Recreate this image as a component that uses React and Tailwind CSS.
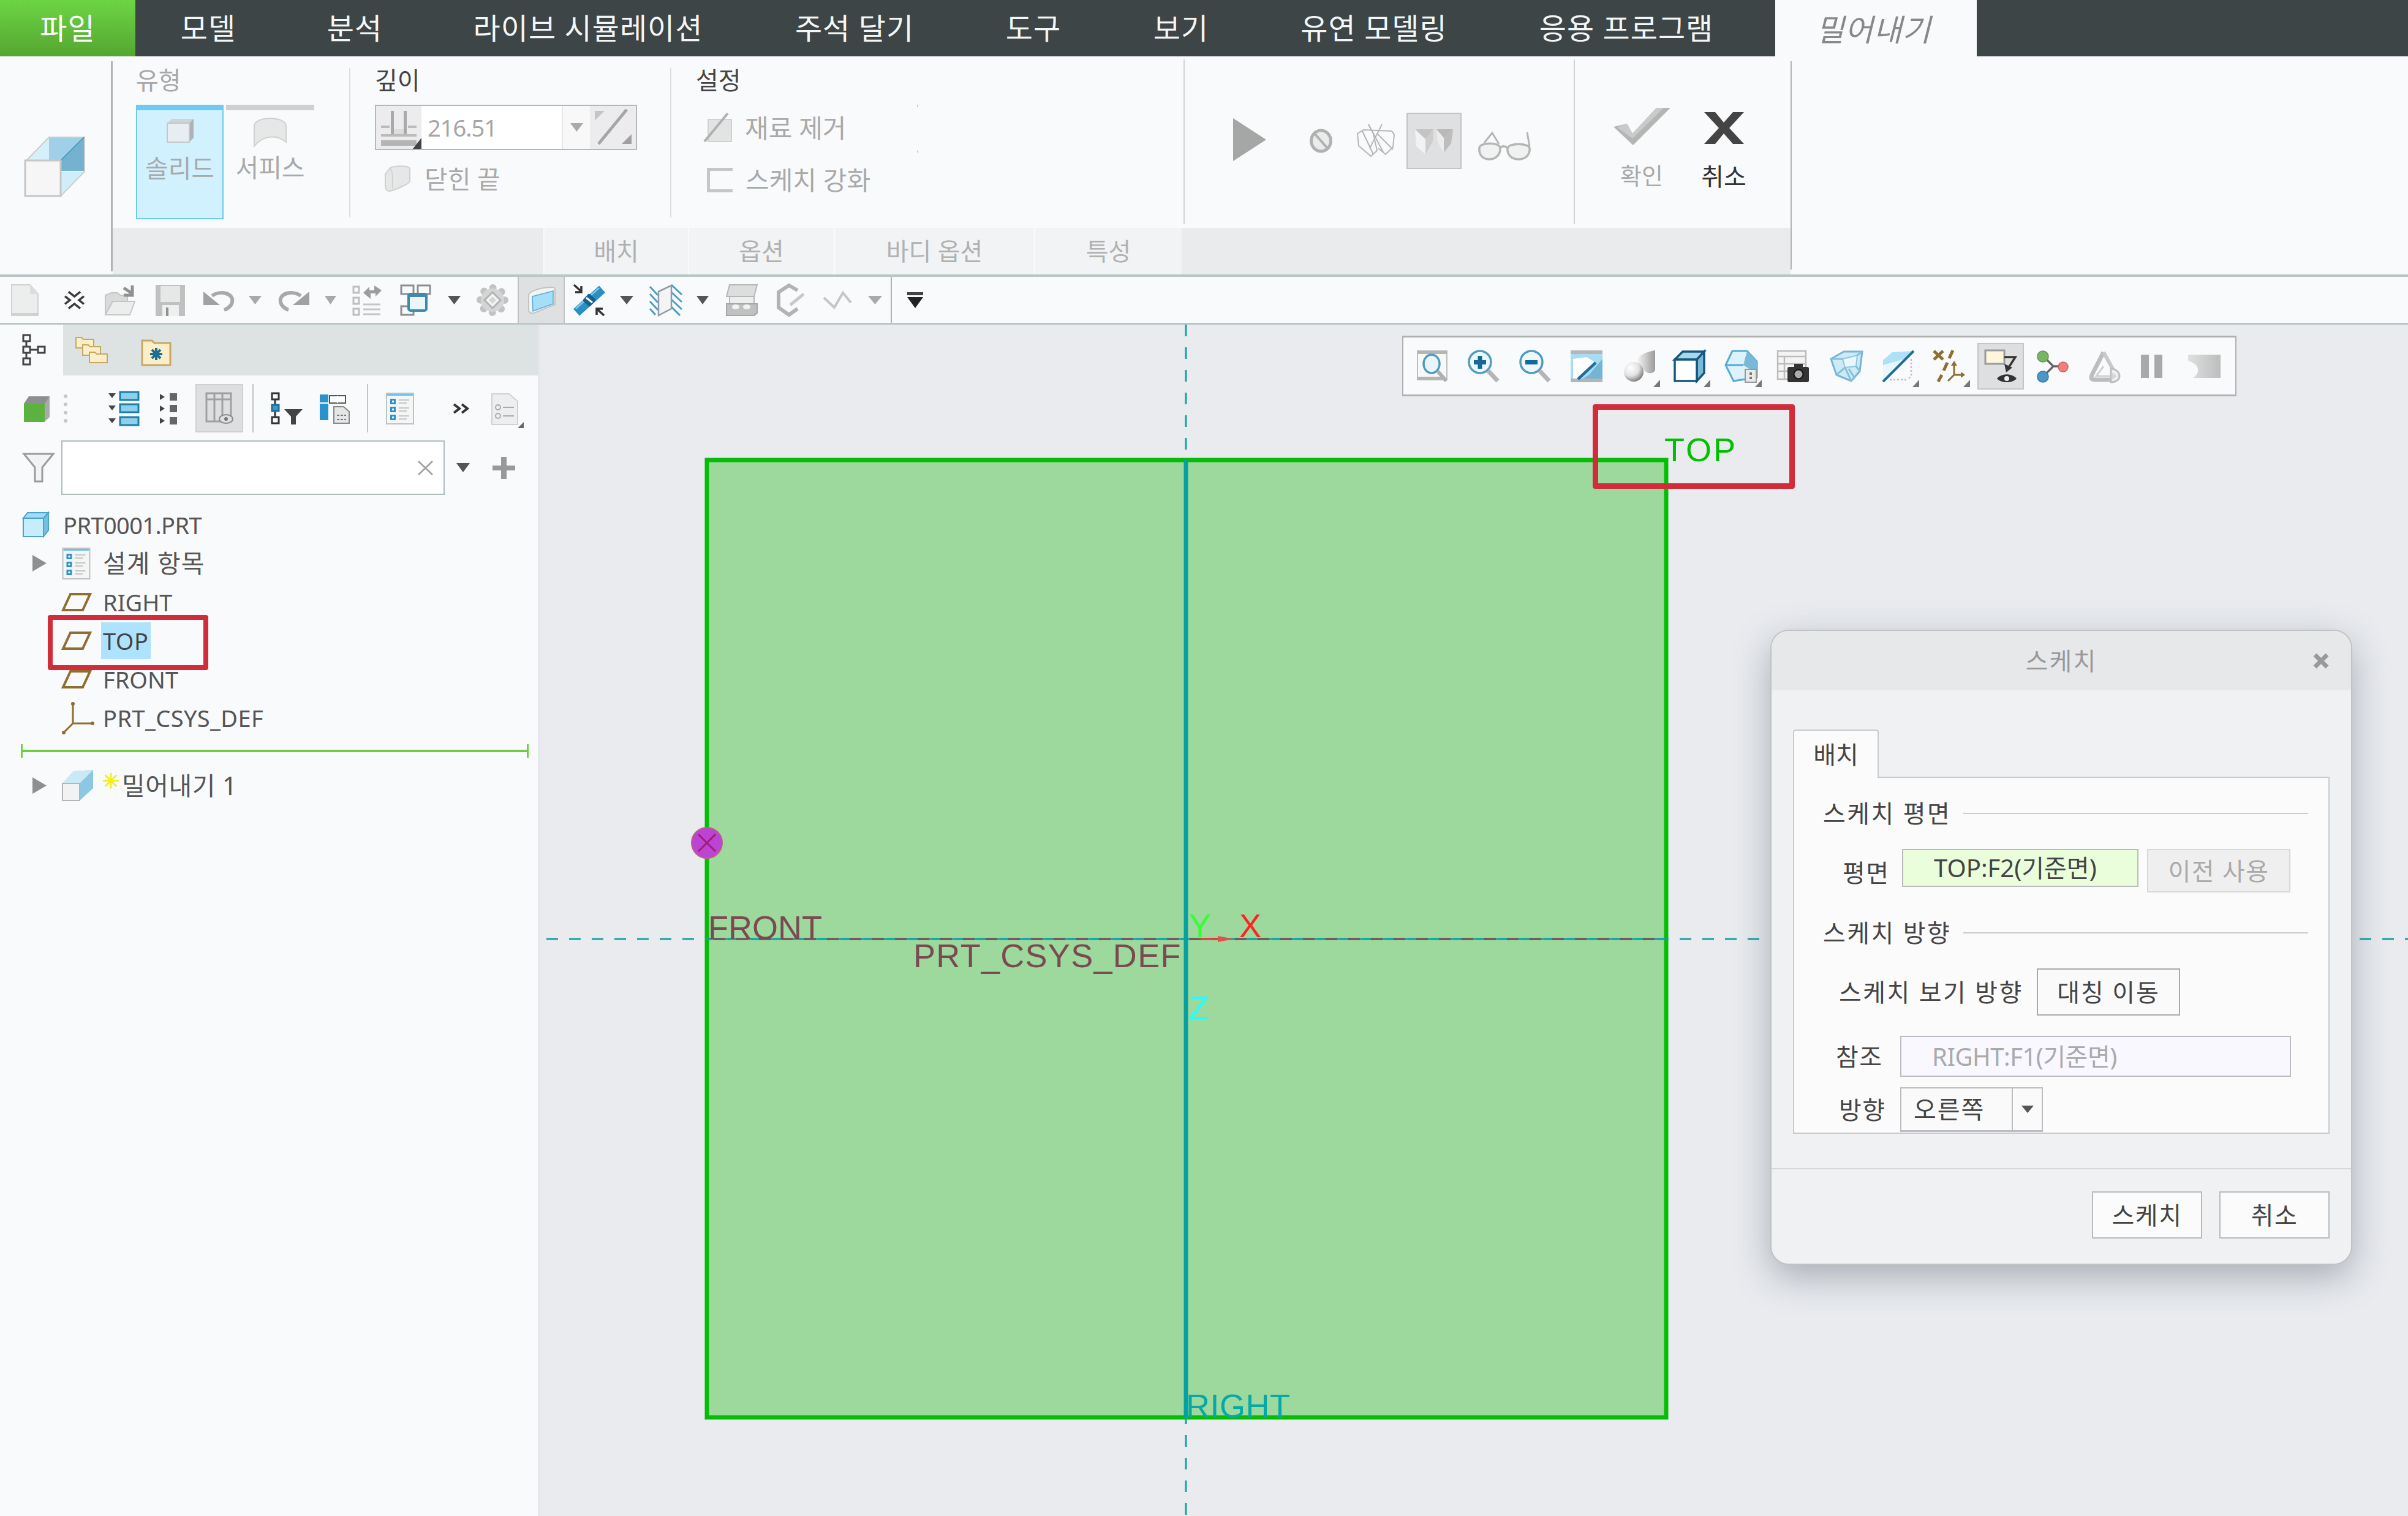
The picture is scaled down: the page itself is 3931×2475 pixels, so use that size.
import React from "react";

const Ico = ({ w, h, vb, className = "", children }) => (
  <svg width={w} height={h} viewBox={vb || `0 0 ${w} ${h}`} className={`block shrink-0 overflow-visible ${className}`}>
    {children}
  </svg>
);

const Tri = ({ w = 21, h = 14, c = "#a9a9a9", className = "" }) => (
  <Ico w={w} h={h} className={className}>
    <polygon points={`0,0 ${w},0 ${w / 2},${h}`} fill={c} />
  </Ico>
);

// small flyout mark at the corner of toolbar icons
const Flyout = () => <polygon points="49,60 60,48 60,60" fill="#777" />;

// ---- ribbon icons
const ExtrudeIcon = () => (
  <Ico w={100} h={106} vb="40 220 100 106">
    <polygon points="43,262 80,224 80,262" fill="#d5f0fa" />
    <polygon points="80,224 137,224 99,262 80,262" fill="#9fd0e8" />
    <polygon points="99,262 137,224 137,279 99,279" fill="#74b2d0" />
    <polygon points="99,280 137,280 99,318" fill="#cfeefa" />
    <path d="M43 262 L80 224 H138 V280 L99 320" fill="none" stroke="#c9cdcf" strokeWidth="2" />
    <line x1="99" y1="262" x2="137" y2="224" stroke="#4f9cc2" strokeWidth="2" />
    <rect x="41" y="262" width="58" height="58" fill="#f6f6f6" stroke="#c6c6c6" strokeWidth="3" />
  </Ico>
);

const SolidIcon = () => (
  <Ico w={44} h={40}>
    <polygon points="1,8 9,1 44,1 37,8" fill="#cfd3d6" />
    <polygon points="37,8 44,1 44,32 37,39" fill="#aeb2b4" />
    <rect x="1" y="8" width="36" height="31" fill="#e8edf1" stroke="#c4c7c9" strokeWidth="2" />
  </Ico>
);

const SurfaceIcon = () => (
  <Ico w={54} h={48}>
    <path d="M1 47 V14 C1 -3 53 -3 53 14 V40 C36 26 14 30 1 47Z" fill="#e6e8e8" stroke="#cfd1d1" strokeWidth="2" />
  </Ico>
);

const DepthIcon = () => (
  <Ico w={74} h={70} className="bg-[#ececee]">
    <rect x="8" y="32" width="14" height="4" fill="#bbb" />
    <rect x="52" y="32" width="14" height="4" fill="#bbb" />
    <rect x="8" y="46" width="58" height="4" fill="#bbb" />
    <rect x="8" y="56" width="58" height="9" fill="#b5b5b5" />
    <rect x="24" y="8" width="5" height="38" fill="#aaa" />
    <rect x="45" y="8" width="5" height="38" fill="#aaa" />
    <rect x="29" y="38" width="16" height="8" fill="#ddd" />
    <polygon points="60,70 74,52 74,70" fill="#444" />
  </Ico>
);

const FlipIcon = () => (
  <Ico w={75} h={70} className="bg-[#ececee]">
    <line x1="14" y1="62" x2="60" y2="6" stroke="#a5a5a5" strokeWidth="5" />
    <polygon points="8,8 24,8 8,24" fill="#c5c5c5" />
    <polygon points="68,62 52,62 68,46" fill="#a0a0a0" />
  </Ico>
);

const ClosedEndIcon = () => (
  <Ico w={44} h={44}>
    <path d="M2 14 L10 4 C18 0 42 0 42 6 V26 C42 30 14 42 8 42 C4 42 2 38 2 34Z" fill="#e6e8e8" stroke="#cfd1d1" strokeWidth="2" />
    <path d="M10 4 C14 10 14 14 14 38" fill="none" stroke="#d2d4d4" strokeWidth="2" />
  </Ico>
);

const RemoveIcon = () => (
  <Ico w={46} h={48}>
    <rect x="6" y="10" width="38" height="36" fill="#e2e4e4" stroke="#d0d2d2" strokeWidth="2" />
    <line x1="0" y1="46" x2="38" y2="0" stroke="#b0b0b0" strokeWidth="4" />
  </Ico>
);

const PlayIcon = () => (
  <Ico w={54} h={70}>
    <polygon points="0,0 54,35 0,70" fill="#a5a7a7" />
  </Ico>
);

const StopIcon = () => (
  <Ico w={39} h={40}>
    <ellipse cx="19.5" cy="20" rx="16" ry="17" fill="#eaebeb" stroke="#b0b2b2" strokeWidth="5" />
    <line x1="9" y1="8" x2="30" y2="32" stroke="#b0b2b2" strokeWidth="4" />
  </Ico>
);

const WireIcon = () => (
  <Ico w={65} h={53}>
    <g fill="none" stroke="#b4b6b6" strokeWidth="2">
      <polyline points="20,1 28,16 34,44 24,53 4,36 2,16 12,10 58,12 62,18 60,38 48,50 36,40" />
      <line x1="42" y1="1" x2="22" y2="40" />
      <line x1="10" y1="12" x2="28" y2="50" />
      <line x1="34" y1="16" x2="60" y2="42" />
      <line x1="20" y1="1" x2="44" y2="46" />
    </g>
  </Ico>
);

const ActiveFacesIcon = () => (
  <Ico w={62} h={43}>
    <polygon points="0,2 17,18 17,43 2,30" fill="#f2f2f2" />
    <polygon points="30,2 17,18 17,43 29,22" fill="#cdcdcd" />
    <polygon points="0,2 30,2 17,18" fill="#c4c4c4" />
    <polygon points="35,2 47,16 47,40 37,23" fill="#ececec" />
    <polygon points="62,2 47,16 47,40 59,25" fill="#bdbdbd" />
    <polygon points="35,2 62,2 47,16" fill="#b8b8b8" />
  </Ico>
);

const GlassesIcon = () => (
  <Ico w={87} h={47}>
    <path d="M2 26 C4 17 34 17 36 26 C37 36 30 45 18 45 C6 45 1 36 2 26Z" fill="#f1f1f1" stroke="#b4b6b6" strokeWidth="3.5" />
    <path d="M48 27 C50 18 82 18 84 27 C85 37 78 45 66 45 C54 45 47 37 48 27Z" fill="#f1f1f1" stroke="#b4b6b6" strokeWidth="3.5" />
    <path d="M36 26 C40 23 45 23 48 27" fill="none" stroke="#b4b6b6" strokeWidth="3.5" />
    <path d="M10 18 L23 2 L34 20" fill="none" stroke="#b4b6b6" strokeWidth="3" />
    <path d="M80 1 L84 24" fill="none" stroke="#b4b6b6" strokeWidth="3" />
  </Ico>
);

const CheckIcon = () => (
  <Ico w={93} h={64}>
    <polygon points="0,33 22,28 31,44 70,2 93,2 32,63" fill="#b4b6b6" />
    <polygon points="22,28 31,44 70,2 82,2 31,52 6,34" fill="#c9caca" />
  </Ico>
);

const CancelIcon = () => (
  <Ico w={65} h={52}>
    <polygon points="0,0 18,0 32,17 47,0 65,0 41,26 65,52 47,52 32,35 18,52 0,52 24,26" fill="#444" />
  </Ico>
);

// ---- quick access toolbar
const IcoNew = ({ className }) => (
  <Ico w={45} h={52} className={className}>
    <path d="M1 1 H31 L44 16 V51 H1Z" fill="#eceeee" stroke="#d0d2d2" strokeWidth="2" />
    <path d="M31 1 V16 H44" fill="#dcdede" />
    <rect x="1" y="47" width="43" height="4" fill="#cfd1d1" />
  </Ico>
);
const IcoClose = ({ className }) => (
  <Ico w={39} h={30} className={className}>
    <path d="M7 5 L32 25 M32 5 L7 25" stroke="#3c3c3c" strokeWidth="13" />
    <path d="M7 5 L32 25 M32 5 L7 25" stroke="#fff" strokeWidth="6" />
  </Ico>
);
const IcoOpen = ({ className }) => (
  <Ico w={52} h={52} className={className}>
    <path d="M2 50 V18 L12 14 H22 L26 18 H38 V28 H14 L2 50Z" fill="#d9dbdb" stroke="#c5c7c7" strokeWidth="2" />
    <path d="M2 50 L14 28 H50 L42 50Z" fill="#eceeee" stroke="#c5c7c7" strokeWidth="2" />
    <path d="M32 6 L44 14 M46 2 V18 H32" fill="none" stroke="#8f9191" strokeWidth="5" />
  </Ico>
);
const IcoSave = ({ className }) => (
  <Ico w={50} h={52} className={className}>
    <rect x="1" y="1" width="48" height="51" fill="#bfc1c1" />
    <rect x="9" y="3" width="32" height="26" fill="#e6e7e7" />
    <rect x="12" y="34" width="27" height="18" fill="#efefef" />
    <rect x="18" y="38" width="4" height="14" fill="#8f9191" />
  </Ico>
);
const IcoUndo = ({ className, flip }) => (
  <Ico w={49} h={34} className={className}>
    <g transform={flip ? "translate(49,0) scale(-1,1)" : undefined}>
      <path d="M14 10 C28 0 50 6 47 20 C46 26 40 31 34 33" fill="none" stroke="#a8aaaa" strokeWidth="6" />
      <polygon points="0,3 0,25 27,25" fill="#a0a2a2" />
    </g>
  </Ico>
);
const IcoRegen = ({ className }) => (
  <Ico w={50} h={52} className={className}>
    <g fill="none" stroke="#bdbfbf" strokeWidth="3">
      <rect x="2" y="4" width="9" height="10" />
      <rect x="2" y="22" width="9" height="10" />
      <rect x="2" y="40" width="9" height="10" />
    </g>
    <path d="M18 33 H46 M18 41 H46 M18 49 H46" stroke="#c4c6c6" strokeWidth="3" />
    <path d="M18 14 L28 4 V10 H36 V2 L48 10 L38 20 V15 H30 V24Z" fill="#9c9e9e" />
  </Ico>
);
const IcoWin = ({ className }) => (
  <Ico w={50} h={52} className={className}>
    <g fill="none" stroke="#8d8f8f" strokeWidth="3">
      <rect x="1" y="2" width="20" height="14" />
      <rect x="28" y="2" width="20" height="14" />
      <rect x="1" y="36" width="20" height="14" />
    </g>
    <rect x="13" y="16" width="29" height="27" rx="3" fill="#eaf6fc" stroke="#4088ad" strokeWidth="4" />
    <rect x="13" y="16" width="29" height="5" fill="#4088ad" />
  </Ico>
);
const IcoGear = ({ className }) => (
  <Ico w={53} h={52} className={className}>
    <circle cx="26" cy="26" r="20" fill="none" stroke="#c2c4c4" strokeWidth="12" strokeDasharray="0.1 15.6" strokeLinecap="round" />
    <circle cx="26" cy="26" r="19" fill="#d4d6d6" />
    <polygon points="26,13 39,26 26,39 13,26" fill="#f4f4f4" stroke="#b2b4b4" strokeWidth="3" />
    <polygon points="26,20 32,26 26,32 20,26" fill="#d4d6d6" />
  </Ico>
);
const IcoPlaneBlue = () => (
  <Ico w={44} h={44}>
    <path d="M1 14 C1 7 24 0 41 1 C43 1 44 2 44 5 V29 L10 43 C4 44 1 42 1 38Z" fill="#f2f3f3" stroke="#c2c4c4" strokeWidth="2" />
    <polygon points="7,16 41,7 41,28 8,40" fill="#a4def8" stroke="#58acd4" strokeWidth="1.5" />
  </Ico>
);
const IcoDatum = ({ className }) => (
  <Ico w={50} h={52} className={className}>
    <line x1="5" y1="46" x2="47" y2="8" stroke="#2b8fc4" strokeWidth="15" />
    <line x1="4" y1="40" x2="42" y2="6" stroke="#7dc5e6" strokeWidth="3" />
    <rect x="18" y="18" width="16" height="16" rx="3" fill="#14618c" transform="rotate(42 26 26)" />
    <path d="M21 22 L31 30" stroke="#fff" strokeWidth="3" />
    <path d="M1 1 L13 12 M13 3 V13 H3" fill="none" stroke="#333" strokeWidth="3.5" />
    <path d="M50 51 L38 40 M38 50 V40 H48" fill="none" stroke="#333" strokeWidth="3.5" />
  </Ico>
);
const IcoHatch = ({ className }) => (
  <Ico w={54} h={52} className={className}>
    <path d="M1 4 L14 18 M1 16 L14 30 M1 28 L14 42 M1 40 L10 50" stroke="#4e9cc2" strokeWidth="3" />
    <path d="M36 1 L53 17 M36 13 L53 29 M36 25 L53 41 M36 37 L50 51" stroke="#4e9cc2" strokeWidth="3" />
    <polygon points="15,12 36,2 36,40 15,51" fill="#f4f4f4" stroke="#8b9da6" strokeWidth="2.5" />
  </Ico>
);
const IcoStack = ({ className }) => (
  <Ico w={51} h={52} className={className}>
    <polygon points="6,1 51,1 46,20 1,20" fill="#dcdede" stroke="#b5b7b7" strokeWidth="2" />
    <rect x="6" y="20" width="40" height="12" fill="#eceded" stroke="#b5b7b7" strokeWidth="2" />
    <polygon points="1,32 51,32 51,47 46,51 1,51" fill="#bfc1c1" stroke="#a5a7a7" strokeWidth="2" />
    <ellipse cx="16" cy="37" rx="6" ry="4" fill="#f2f2f2" />
    <ellipse cx="34" cy="37" rx="6" ry="4" fill="#f2f2f2" />
  </Ico>
);
const IcoHex = ({ className }) => (
  <Ico w={46} h={52} className={className}>
    <path d="M34 10 L20 2 L3 13 V38 L20 50 L34 40" fill="none" stroke="#b2b4b4" strokeWidth="6" />
    <path d="M22 34 L44 16" stroke="#c8caca" strokeWidth="5" />
  </Ico>
);
const IcoTick = ({ className }) => (
  <Ico w={46} h={28} className={className}>
    <path d="M1 10 L18 26 L32 2 L45 18" fill="none" stroke="#c5c7c7" strokeWidth="4" />
  </Ico>
);

// ---- model tree toolbar
const IcoTree = () => (
  <Ico w={39} h={52}>
    <g fill="none" stroke="#444" strokeWidth="3">
      <rect x="2" y="2" width="11" height="10" />
      <rect x="2" y="21" width="11" height="10" />
      <rect x="2" y="40" width="11" height="10" />
      <rect x="26" y="21" width="11" height="10" />
      <path d="M7 12 V21 M7 31 V40 M13 26 H26" />
    </g>
  </Ico>
);
const Folder = ({ x, y }) => (
  <g transform={`translate(${x} ${y})`}>
    <path d="M1 6 H10 L13 9 H30 V23 H1Z" fill="#fbeec8" stroke="#c8a860" strokeWidth="2" />
  </g>
);
const IcoLayers = () => (
  <Ico w={54} h={52}>
    <Folder x={0} y={0} />
    <Folder x={11} y={12} />
    <Folder x={22} y={24} />
  </Ico>
);
const IcoFolderStar = () => (
  <Ico w={50} h={48}>
    <path d="M2 6 H18 L22 10 H48 V46 H2Z" fill="#fbeec8" stroke="#c8a860" strokeWidth="3" />
    <path d="M25 18 V38 M15 28 H35 M18 21 L32 35 M32 21 L18 35" stroke="#1a6f95" strokeWidth="4" />
  </Ico>
);
const IcoCube = () => (
  <Ico w={43} h={44}>
    <polygon points="8,2 42,2 36,14 0,14" fill="#8d8f8f" />
    <polygon points="34,14 42,2 42,36 34,43" fill="#a8aaaa" />
    <rect x="0" y="14" width="34" height="30" fill="#5cb23e" />
  </Ico>
);
const IcoExpand = () => (
  <Ico w={50} h={54}>
    {[0, 20, 41].map((y) => (
      <g key={y}>
        <polygon points={`0,${y + 2} 12,${y + 2} 6,${y + 10}`} fill="#444" />
        <rect x="19" y={y} width="30" height="13" fill="#8bd0ec" stroke="#1d7ea8" strokeWidth="3" />
      </g>
    ))}
  </Ico>
);
const IcoCollapse = () => (
  <Ico w={29} h={54}>
    {[2, 21, 41].map((y) => (
      <g key={y}>
        <polygon points={`0,${y + 1} 8,${y + 6} 0,${y + 11}`} fill="#444" />
        <rect x="16" y={y} width="12" height="12" fill="#666" />
      </g>
    ))}
  </Ico>
);
const IcoColumns = () => (
  <Ico w={46} h={54}>
    <g fill="none" stroke="#9fa1a1" strokeWidth="3">
      <rect x="2" y="2" width="40" height="46" />
      <path d="M2 12 H42 M15 2 V48 M28 2 V48" />
    </g>
    <ellipse cx="34" cy="44" rx="11" ry="7" fill="#dedfe1" stroke="#8c8e8e" strokeWidth="2" />
    <circle cx="34" cy="44" r="3" fill="#777" />
  </Ico>
);
const IcoFilterTree = () => (
  <Ico w={52} h={52}>
    <g fill="none" stroke="#333" strokeWidth="3">
      <rect x="2" y="1" width="11" height="10" />
      <rect x="2" y="40" width="11" height="10" />
      <path d="M7 11 V20 M7 31 V40" />
    </g>
    <rect x="2" y="20" width="11" height="10" fill="#3a9bd0" stroke="#1d6e9a" strokeWidth="3" />
    <polygon points="22,27 52,27 41,39 41,52 33,52 33,39" fill="#444" />
  </Ico>
);
const IcoTableDoc = () => (
  <Ico w={50} h={50}>
    <rect x="1" y="2" width="14" height="42" fill="#2b93cb" />
    <rect x="17" y="4" width="26" height="12" fill="#fff" stroke="#555" strokeWidth="2" />
    <path d="M30 4 V16 M1 16 H15" stroke="#fff" strokeWidth="2" />
    <path d="M24 22 H40 L49 30 V49 H24Z" fill="#e5e6e6" stroke="#888" strokeWidth="2" />
    <path d="M29 36 H44 M29 43 H44" stroke="#777" strokeWidth="2" strokeDasharray="4 2" />
  </Ico>
);
const IcoItems = ({ w = 46, h = 52 }) => (
  <Ico w={w} h={h} vb="0 0 46 52">
    <rect x="1" y="1" width="44" height="50" fill="#f4f5f5" stroke="#bfc1c1" strokeWidth="2" />
    <rect x="2" y="2" width="42" height="3" fill="#6ec1e8" />
    {[10, 23, 36].map((y) => (
      <g key={y}>
        <rect x="7" y={y} width="9" height="9" fill="#2b93cb" />
        <rect x="10" y={y + 3} width="3" height="3" fill="#fff" />
        <path d={`M21 ${y + 2} H38 M21 ${y + 7} H34`} stroke="#c5c7c7" strokeWidth="2" />
      </g>
    ))}
  </Ico>
);
const IcoChev = () => (
  <Ico w={27} h={18}>
    <path d="M2 2 L11 9 L2 16 M15 2 L24 9 L15 16" fill="none" stroke="#333" strokeWidth="4" />
  </Ico>
);
const IcoDoc = () => (
  <Ico w={54} h={58}>
    <path d="M2 2 H30 L44 14 V52 H2Z" fill="#edeef0" stroke="#cfd1d3" strokeWidth="2" />
    <circle cx="12" cy="24" r="4" fill="none" stroke="#aaa" strokeWidth="2" />
    <circle cx="12" cy="38" r="4" fill="none" stroke="#aaa" strokeWidth="2" />
    <path d="M20 24 H38 M20 38 H38" stroke="#aaa" strokeWidth="2" />
    <polygon points="44,58 54,48 54,58" fill="#666" />
  </Ico>
);
const IcoFunnel = () => (
  <Ico w={52} h={50}>
    <polygon points="2,2 50,2 32,24 32,47 20,47 20,24" fill="#f2f3f4" stroke="#9a9c9c" strokeWidth="3" />
  </Ico>
);
const IcoPart = () => (
  <Ico w={43} h={41}>
    <polygon points="8,1 42,1 34,10 1,10" fill="#9fdcf5" stroke="#4ba3cc" strokeWidth="2" />
    <rect x="1" y="10" width="33" height="30" fill="#c5edfb" stroke="#4ba3cc" strokeWidth="2" />
    <polygon points="34,10 42,1 42,30 34,40" fill="#74bfe2" stroke="#4ba3cc" strokeWidth="2" />
  </Ico>
);
const IcoDatumPlane = () => (
  <Ico w={48} h={30}>
    <polygon points="14,2 46,2 34,28 2,28" fill="none" stroke="#8f6e2f" strokeWidth="4" />
  </Ico>
);
const IcoCsys = () => (
  <Ico w={53} h={54}>
    <path d="M18 4 V36 L50 36 M18 36 L3 51" fill="none" stroke="#8f6e2f" strokeWidth="3" />
    <circle cx="18" cy="4" r="3" fill="#8f6e2f" />
    <circle cx="50" cy="36" r="3" fill="#8f6e2f" />
    <circle cx="3" cy="51" r="3" fill="#8f6e2f" />
  </Ico>
);
const IcoExtrudeSmall = () => (
  <Ico w={52} h={52}>
    <polygon points="20,2 52,0 52,30 30,50 2,50 2,22" fill="#8cc8e2" />
    <polygon points="2,22 20,2 52,0 30,22" fill="#cbe9f5" />
    <rect x="2" y="22" width="28" height="28" fill="#f2f2f2" stroke="#b5b5b5" strokeWidth="2" />
  </Ico>
);
const TreeArrow = () => (
  <Ico w={23} h={27}>
    <polygon points="0,0 23,13.5 0,27" fill="#8e9090" />
  </Ico>
);

// ---- graphics toolbar
const V1 = () => (
  <Ico w={52} h={52}>
    <rect x="1" y="1" width="48" height="47" fill="#f8f8f8" stroke="#bcbebe" strokeWidth="2" />
    <rect x="1" y="1" width="48" height="5" fill="#b4b6b6" />
    <rect x="1" y="43" width="40" height="5" fill="#b4b6b6" />
    <ellipse cx="24" cy="22" rx="13" ry="15" fill="#e8f6fc" stroke="#4f9dbd" strokeWidth="3.5" />
    <line x1="34" y1="34" x2="48" y2="50" stroke="#b0b0b0" strokeWidth="6" />
  </Ico>
);
const Mag = ({ plus }) => (
  <Ico w={53} h={52}>
    <circle cx="20" cy="19" r="18" fill="#eef8fc" stroke="#4f9dbd" strokeWidth="3.5" />
    <rect x="10" y="16" width="20" height="7" fill="#136a97" />
    {plus && <rect x="16.5" y="9" width="7" height="21" fill="#136a97" />}
    <line x1="33" y1="33" x2="49" y2="50" stroke="#b5b5b5" strokeWidth="7" />
  </Ico>
);
const V4 = () => (
  <Ico w={52} h={52}>
    <rect x="0" y="0" width="52" height="52" fill="#a8dcf2" />
    <polygon points="30,40 52,14 52,46 20,46" fill="#74b4d4" />
    <rect x="0" y="0" width="52" height="6" fill="#b4b6b6" />
    <rect x="0" y="46" width="52" height="6" fill="#b4b6b6" />
    <polygon points="4,14 26,11 41,20 14,46 4,46" fill="#fff" />
    <line x1="12" y1="47" x2="41" y2="20" stroke="#1d6e9a" strokeWidth="4.5" />
  </Ico>
);
const V5 = () => (
  <Ico w={54} h={52}>
    <defs>
      <radialGradient id="sph" cx="0.35" cy="0.3" r="0.75">
        <stop offset="0" stopColor="#fff" />
        <stop offset="0.55" stopColor="#e2e2e2" />
        <stop offset="1" stopColor="#777" />
      </radialGradient>
      <linearGradient id="cap" x1="0" x2="1" y1="0" y2="0">
        <stop offset="0" stopColor="#fff" />
        <stop offset="1" stopColor="#9a9a9a" />
      </linearGradient>
    </defs>
    <path d="M20 18 C26 6 40 2 52 0 V32 C50 38 40 40 34 32 Z" fill="url(#cap)" />
    <circle cx="17" cy="35" r="16" fill="url(#sph)" />
    <Flyout />
  </Ico>
);
const V6 = () => (
  <Ico w={53} h={52}>
    <polygon points="2,15 15,2 50,2 38,15" fill="#a6d9ef" stroke="#16577e" strokeWidth="3.5" />
    <polygon points="38,15 50,2 50,37 38,50" fill="#79b9d8" stroke="#16577e" strokeWidth="3.5" />
    <rect x="2" y="15" width="36" height="35" fill="#fff" stroke="#16577e" strokeWidth="3.5" />
    <Flyout />
  </Ico>
);
const V7 = () => (
  <Ico w={54} h={52}>
    <polygon points="1,24 12,1 36,1 52,18 52,44 14,50" fill="#dcf3fc" stroke="#55abd3" strokeWidth="3" />
    <polygon points="36,1 52,18 52,38 30,24" fill="#7ab8d8" />
    <line x1="1" y1="24" x2="30" y2="24" stroke="#55abd3" strokeWidth="3" />
    <rect x="33" y="31" width="18" height="21" fill="#e9eaea" stroke="#999" strokeWidth="2" />
    <rect x="40" y="36" width="4" height="4" fill="#777" />
    <rect x="40" y="43" width="4" height="4" fill="#777" />
    <Flyout />
  </Ico>
);
const V8 = () => (
  <Ico w={52} h={52}>
    <rect x="1" y="1" width="46" height="46" fill="#f4f4f4" stroke="#bbb" strokeWidth="2.5" />
    <path d="M1 10 H47 M1 22 H47 M1 34 H18 M12 10 V47" stroke="#bbb" strokeWidth="2.5" />
    <rect x="17" y="27" width="35" height="25" rx="3" fill="#333" />
    <rect x="28" y="22" width="14" height="7" fill="#333" />
    <circle cx="35" cy="39" r="7.5" fill="#aaa" stroke="#111" strokeWidth="2" />
  </Ico>
);
const V9 = () => (
  <Ico w={53} h={52}>
    <polygon points="1,14 22,2 52,2 48,34 34,50 10,40" fill="#cdeaf6" stroke="#74b6d4" strokeWidth="3" />
    <polygon points="20,14 44,8 42,26 24,28" fill="#e9f6fb" stroke="#8cc6de" strokeWidth="2" />
    <path d="M24 28 L10 40 M24 28 L34 50 M30 30 L40 46 M42 26 L48 34 M1 14 L20 14 M44 8 L52 2" fill="none" stroke="#84c0da" strokeWidth="3" />
  </Ico>
);
const V10 = () => (
  <Ico w={52} h={52}>
    <polygon points="1,16 16,3 51,1 1,51" fill="#aee1f5" />
    <polygon points="1,24 36,14 1,50" fill="#e8f7fc" />
    <line x1="1" y1="51" x2="51" y2="1" stroke="#1d6e9a" strokeWidth="4" />
    <path d="M12 48 H42 M47 14 V40 L42 48" fill="none" stroke="#c0c0c0" strokeWidth="2.5" strokeDasharray="3 3" />
    <Flyout />
  </Ico>
);
const V11 = () => (
  <Ico w={53} h={52}>
    <g stroke="#8f6e2f" fill="none">
      <path d="M1 1 L16 15 M16 1 L1 15" strokeWidth="5" />
      <path d="M32 0 L26 13 M23 20 L17 33 M14 40 L8 51" strokeWidth="5" />
      <path d="M34 21 V40 H50 M34 40 L24 50" strokeWidth="3" />
    </g>
    <polygon points="34,17 29,25 39,25" fill="#8f6e2f" />
    <polygon points="52,40 45,35 45,45" fill="#8f6e2f" />
    <Flyout />
  </Ico>
);
const V12 = () => (
  <Ico w={54} h={56}>
    <rect x="2" y="2" width="31" height="22" fill="#fff6dc" stroke="#9a9c9c" strokeWidth="3" />
    <path d="M33 13 H51 L40 30" fill="none" stroke="#333" strokeWidth="3.5" />
    <polygon points="36,38 33,24 46,30" fill="#333" />
    <path d="M21 48 C28 39 46 39 53 48 C46 56 28 56 21 48Z" fill="#333" />
    <circle cx="37" cy="48" r="4" fill="#eee" />
  </Ico>
);
const V13 = () => (
  <Ico w={52} h={52}>
    <path d="M11 10 L27 26 L11 42 M27 26 L43 26" fill="none" stroke="#666" strokeWidth="3.5" />
    <ellipse cx="10" cy="10" rx="9" ry="9" fill="#79b565" stroke="#5e9a4c" strokeWidth="1.5" />
    <ellipse cx="43" cy="27" rx="8" ry="8" fill="#ee8080" stroke="#d06060" strokeWidth="1.5" />
    <ellipse cx="10" cy="43" rx="9" ry="9" fill="#4a96c4" stroke="#337daa" strokeWidth="1.5" />
  </Ico>
);
const V14 = () => (
  <Ico w={54} h={52}>
    <path d="M26 3 L8 38 C4 46 6 48 14 48 H40" fill="none" stroke="#bcbebe" strokeWidth="7" />
    <path d="M26 3 L42 32" fill="none" stroke="#c8caca" strokeWidth="6" />
    <path d="M26 26 L14 42 H36" fill="none" stroke="#d0d2d2" strokeWidth="3" />
    <path d="M38 30 C46 30 52 36 52 42 C52 48 46 52 38 52Z" fill="#f0f0f0" stroke="#bcbebe" strokeWidth="3" />
    <polygon points="40,36 48,42 40,48" fill="#d5d7d7" />
  </Ico>
);
const V15 = () => (
  <Ico w={37} h={38}>
    <rect x="1" y="0" width="13" height="38" fill="#a8aaaa" />
    <rect x="23" y="0" width="13" height="38" fill="#a8aaaa" />
  </Ico>
);
const V16 = () => (
  <Ico w={53} h={38}>
    <defs>
      <linearGradient id="pipe" x1="0" x2="1" y1="0" y2="0">
        <stop offset="0" stopColor="#dfe1e1" />
        <stop offset="1" stopColor="#bcbebe" />
      </linearGradient>
    </defs>
    <path d="M0 0 H53 V38 H8 C20 30 20 16 0 10Z" fill="url(#pipe)" />
  </Ico>
);

const ribbonTabs = [
  { label: "파일", cls: "w-[221px] text-white bg-gradient-to-b from-[#6dd544] to-[#55a631]" },
  { label: "모델", cls: "w-[238px] text-[#f4f6f6]" },
  { label: "분석", cls: "w-[240px] text-[#f4f6f6]" },
  { label: "라이브 시뮬레이션", cls: "w-[522px] text-[#f4f6f6]" },
  { label: "주석 달기", cls: "w-[348px] text-[#f4f6f6]" },
  { label: "도구", cls: "w-[236px] text-[#f4f6f6]" },
  { label: "보기", cls: "w-[246px] text-[#f4f6f6]" },
  { label: "유연 모델링", cls: "w-[384px] text-[#f4f6f6]" },
  { label: "응용 프로그램", cls: "w-[440px] text-[#f4f6f6]" },
];

function Ribbon() {
  return (
    <div className="flex h-[356px] bg-[#f9fafc] border-b-4 border-[#b9c6c6] box-content">
      <div className="w-[181px] shrink-0 pl-[40px] pt-[128px]">
        <ExtrudeIcon />
      </div>
      <div className="w-[3px] bg-[#b0b4b4] my-[8px] mb-[5px]" />
      <div className="w-[2739px] flex flex-col">
        <div className="h-[280px] flex text-[40px] leading-none">
          {/* 유형 */}
          <div className="w-[388px] border-r-2 border-[#dcdfe0] mt-[19px] mb-[17px] pl-[38px]">
            <div className="h-[40px] text-[#a8a8a8]">유형</div>
            <div className="flex mt-[20px]">
              <div className="w-[143px] h-[187px] bg-[#d2f1ff] border-2 border-t-[9px] border-[#6ccaf5] flex flex-col items-center pt-[13px] text-[#a9a9a9]">
                <SolidIcon />
                <span className="mt-[21px] text-[41px]">솔리드</span>
              </div>
              <div className="w-[144px] ml-[4px] border-t-[9px] border-[#cfd1d1] flex flex-col items-center pt-[12px] text-[#a9a9a9]">
                <SurfaceIcon />
                <span className="mt-[13px] text-[41px]">서피스</span>
              </div>
            </div>
          </div>
          {/* 깊이 */}
          <div className="w-[524px] border-r-2 border-[#dcdfe0] mt-[19px] mb-[17px] pl-[40px]">
            <div className="h-[40px] text-[#444]">깊이</div>
            <div className="mt-[20px] w-[428px] h-[74px] flex border-2 border-[#b5b8b8] bg-white">
              <DepthIcon />
              <div className="flex-1 flex items-center pl-[10px] text-[#a5a5a5] text-[38px] tracking-[-1px]">216.51</div>
              <div className="w-[46px] flex items-center justify-center border-l-2 border-[#e5e6e6] bg-[#f8f8f8]">
                <Tri c="#aaaaaa" />
              </div>
              <FlipIcon />
            </div>
            <div className="flex items-center mt-[25px] pl-[15px]">
              <ClosedEndIcon />
              <span className="ml-[22px] text-[#a9a9a9] text-[41px]">닫힌 끝</span>
            </div>
          </div>
          {/* 설정 */}
          <div className="relative w-[838px] border-r-2 border-[#d0d3d4] mt-[5px] mb-[6px] pl-[40px] pt-[14px]">
            <div className="h-[40px] text-[#444]">설정</div>
            <div className="flex items-center mt-[34px] pl-[14px] text-[#a9a9a9] text-[42px]">
              <RemoveIcon />
              <span className="ml-[20px]">재료 제거</span>
            </div>
            <div className="flex items-center mt-[40px] pl-[18px] text-[#a9a9a9] text-[42px]">
              <div className="w-[42px] h-[40px] border-[5px] border-r-0 border-[#c5c7c7]" />
              <span className="ml-[21px]">스케치 강화</span>
            </div>
            <div className="absolute left-[401px] top-[75px] w-[2px] h-[3px] bg-[#c8c8c8]" />
            <div className="absolute left-[401px] top-[149px] w-[2px] h-[3px] bg-[#c8c8c8]" />
          </div>
          {/* 실행 */}
          <div className="w-[637px] border-r-2 border-[#d0d3d4] mt-[5px] mb-[6px] flex items-start pl-[79px] pt-[87px]">
            <div className="mt-[9px]"><PlayIcon /></div>
            <div className="ml-[70px] mt-[26px]"><StopIcon /></div>
            <div className="ml-[38px] mt-[18px]"><WireIcon /></div>
            <div className="ml-[17px] w-[90px] h-[92px] bg-[#dfe0e2] border-2 border-[#c2c4c4] flex items-center justify-center">
              <ActiveFacesIcon />
            </div>
            <div className="ml-[27px] mt-[31px]"><GlassesIcon /></div>
          </div>
          {/* 확인 취소 */}
          <div className="w-[352px] flex">
            <div className="w-[104px] ml-[57px] flex flex-col items-center pt-[82px] text-[#a9a9a9]">
              <CheckIcon />
              <span className="mt-[29px] text-[38px]">확인</span>
            </div>
            <div className="w-[80px] ml-[42px] flex flex-col items-center pt-[91px] text-[#333]">
              <CancelIcon />
              <span className="mt-[33px] text-[40px]">취소</span>
            </div>
          </div>
        </div>
        <div className="h-[76px] flex bg-[#eaebed] text-[40px] leading-none text-[#b0b2b2]">
          <div className="w-[703px]" />
          <div className="w-[238px] bg-[#f2f3f5] border-x-2 border-[#f9fafc] flex items-center justify-center">배치</div>
          <div className="w-[238px] bg-[#f2f3f5] border-r-2 border-[#f9fafc] flex items-center justify-center">옵션</div>
          <div className="w-[327px] bg-[#f2f3f5] border-r-2 border-[#f9fafc] flex items-center justify-center">바디 옵션</div>
          <div className="w-[239px] bg-[#f2f3f5] flex items-center justify-center">특성</div>
        </div>
      </div>
      <div className="w-[2px] bg-[#b0b4b4] my-[8px]" />
    </div>
  );
}

function QuickBar() {
  return (
    <div className="flex items-center h-[75px] bg-[#f9fafc] border-b-[3px] border-[#b9c6c6] box-content">
      <IcoNew className="ml-[18px]" />
      <IcoClose className="ml-[39px]" />
      <IcoOpen className="ml-[29px]" />
      <IcoSave className="ml-[31px]" />
      <IcoUndo className="ml-[29px]" />
      <Tri className="ml-[25px]" />
      <IcoUndo className="ml-[29px]" flip />
      <Tri w={19} className="ml-[25px]" />
      <IcoRegen className="ml-[26px]" />
      <IcoWin className="ml-[29px]" />
      <Tri c="#555" className="ml-[27px]" />
      <IcoGear className="ml-[26px]" />
      <div className="ml-[14px] w-[77px] h-[75px] bg-[#dfe0e2] border-x-2 border-[#c2c4c4] flex items-center justify-center">
        <IcoPlaneBlue />
      </div>
      <IcoDatum className="ml-[14px]" />
      <Tri c="#555" w={22} className="ml-[26px]" />
      <IcoHatch className="ml-[26px]" />
      <Tri c="#555" w={20} className="ml-[23px]" />
      <IcoStack className="ml-[28px]" />
      <IcoHex className="ml-[32px]" />
      <IcoTick className="ml-[30px]" />
      <Tri w={23} className="ml-[27px]" />
      <div className="ml-[14px] w-[2px] h-full bg-[#b0b4b4]" />
      <div className="ml-[25px] flex flex-col items-center gap-[3px]">
        <div className="w-[26px] h-[5px] bg-[#444]" />
        <Tri w={26} h={18} c="#222" />
      </div>
    </div>
  );
}

const TreeRow = ({ arrow, icon, children }) => (
  <div className="flex items-center h-[63px] shrink-0">
    <div className="w-[53px] shrink-0" />
    <div className="w-[48px] shrink-0">{arrow && <TreeArrow />}</div>
    <div className="w-[67px] shrink-0">{icon}</div>
    {children}
  </div>
);

function Sidebar() {
  return (
    <div className="w-[882px] shrink-0 flex flex-col bg-[#f9fafc] border-r-4 border-[#e5e7ea] text-[38px] leading-none text-[#555]">
      <div className="h-[83px] flex bg-[#dde2e2]">
        <div className="w-[103px] bg-[#f9fafc] pl-[36px] pt-[15px]"><IcoTree /></div>
        <div className="pl-[20px] pt-[15px]"><IcoLayers /></div>
        <div className="pl-[53px] pt-[20px]"><IcoFolderStar /></div>
      </div>
      <div className="flex items-center h-[79px] mt-[14px] pl-[39px]">
        <IcoCube />
        <div className="ml-[22px] w-[8px] h-[46px] border-l-[6px] border-dotted border-[#c5c7c7]" />
        <div className="ml-[65px]"><IcoExpand /></div>
        <div className="ml-[34px]"><IcoCollapse /></div>
        <div className="ml-[29px] w-[78px] h-[79px] bg-[#dedfe1] border-2 border-[#cfd1d1] flex items-center justify-center">
          <IcoColumns />
        </div>
        <div className="ml-[15px] w-[2px] h-[79px] bg-[#c0c4c4]" />
        <div className="ml-[28px]"><IcoFilterTree /></div>
        <div className="ml-[27px]"><IcoTableDoc /></div>
        <div className="ml-[28px] w-[2px] h-[79px] bg-[#c0c4c4]" />
        <div className="ml-[29px]"><IcoItems /></div>
        <div className="ml-[63px]"><IcoChev /></div>
        <div className="ml-[35px] mt-[6px]"><IcoDoc /></div>
      </div>
      <div className="flex items-center h-[89px] mt-[13px] pl-[37px]">
        <IcoFunnel />
        <div className="ml-[11px] w-[626px] h-[89px] bg-white border-2 border-[#aebcbc] flex items-center justify-end pr-[16px]">
          <svg width="27" height="26" viewBox="0 0 27 26" className="block">
            <path d="M2 2 L25 24 M25 2 L2 24" stroke="#a5a7a7" strokeWidth="3" />
          </svg>
        </div>
        <Tri c="#555" w={22} h={15} className="ml-[19px]" />
        <svg width="37" height="36" viewBox="0 0 37 36" className="block ml-[37px]">
          <rect x="0" y="14" width="37" height="8" fill="#999" />
          <rect x="14" y="0" width="9" height="36" fill="#999" />
        </svg>
      </div>
      <div className="mt-[17px] flex flex-col">
        <div className="flex items-center h-[63px] pl-[37px]">
          <IcoPart />
          <span className="ml-[23px] tracking-[-0.6px]">PRT0001.PRT</span>
        </div>
        <TreeRow arrow icon={<IcoItems w={47} h={52} />}>
          <span className="text-[41px] tracking-[1px]">설계 항목</span>
        </TreeRow>
        <TreeRow icon={<IcoDatumPlane />}><span>RIGHT</span></TreeRow>
        <TreeRow icon={<IcoDatumPlane />}>
          <span className="bg-[#aee3ff] -ml-[3px] px-[3px] h-[60px] flex items-center text-[#444] tracking-[0.5px]">TOP</span>
        </TreeRow>
        <TreeRow icon={<IcoDatumPlane />}><span>FRONT</span></TreeRow>
        <TreeRow icon={<IcoCsys />}><span className="tracking-[0.4px]">PRT_CSYS_DEF</span></TreeRow>
      </div>
      <div className="mt-[12px] ml-[34px] w-[829px] h-[22px] flex items-center border-x-[3px] border-[#6ccf3e]">
        <div className="w-full h-[4px] bg-[#6ccf3e]" />
      </div>
      <div className="flex items-center h-[63px] mt-[14px]">
        <div className="w-[53px] shrink-0" />
        <div className="w-[47px] shrink-0"><TreeArrow /></div>
        <IcoExtrudeSmall />
        <div className="ml-[15px] -mt-[18px] text-[#f2ee1c] text-[34px] leading-none font-bold">✳</div>
        <span className="ml-[4px] text-[41px] tracking-[0.5px]">밀어내기 1</span>
      </div>
      {/* 선택된 항목 강조 */}
      <div className="absolute left-[78px] top-[1004px] w-[262px] h-[90px] border-[8px] border-[#d12c39] rounded-[4px]" />
    </div>
  );
}

function Dialog() {
  return (
    <div className="absolute left-[2008px] top-[498px] w-[950px] h-[1037px] bg-[#f0f1f3] border-2 border-[#c0c2c4] rounded-[30px] shadow-[0_20px_60px_rgba(90,100,110,0.45)] overflow-hidden text-[40px] leading-none text-[#444] font-['Noto_Sans','Noto_Sans_CJK_KR',sans-serif]">
      <div className="h-[97px] bg-[#e7e8ea] flex items-center relative justify-center text-[#999] tracking-[2px]">
        스케치
        <svg width="26" height="26" viewBox="0 0 26 26" className="absolute right-[36px] top-[36px]">
          <path d="M3 3 L23 23 M23 3 L3 23" stroke="#999" strokeWidth="7" />
        </svg>
      </div>
      <div className="mt-[64px] ml-[35px] w-[140px] h-[79px] bg-[#fbfbfb] border-2 border-b-0 border-[#c8cbce] rounded-t-[4px] flex items-center justify-center relative z-10 -mb-[2px]">배치</div>
      <div className="ml-[35px] w-[876px] h-[583px] bg-[#fbfbfb] border-2 border-[#c8cbce] flex flex-col">
        <div className="flex items-center h-[40px] mt-[38px] pl-[47px] tracking-[2.5px]">
          <span>스케치 평면</span>
          <div className="ml-[20px] w-[563px] h-[2px] bg-[#c8cbce]" />
        </div>
        <div className="flex items-start mt-[38px] pl-[79px]">
          <span className="w-[97px] h-[77px] flex items-center tracking-[1.5px]">평면</span>
          <div className="w-[386px] h-[62px] bg-[#eafedc] border-2 border-[#b8bbbe] flex items-center pl-[50px]">TOP:F2(기준면)</div>
          <div className="ml-[14px] w-[234px] h-[71px] bg-[#efefef] border-2 border-[#d8d8d8] flex items-center justify-center text-[#aaa] tracking-[1.5px]">이전 사용</div>
        </div>
        <div className="flex items-center h-[40px] mt-[40px] pl-[47px] tracking-[2.5px]">
          <span>스케치 방향</span>
          <div className="ml-[20px] w-[563px] h-[2px] bg-[#c8cbce]" />
        </div>
        <div className="flex items-center mt-[38px] pl-[73px]">
          <span className="w-[323px] tracking-[2.5px]">스케치 보기 방향</span>
          <div className="w-[234px] h-[77px] bg-[#fafafa] border-2 border-[#a9a9a9] flex items-center justify-center tracking-[2px]">대칭 이동</div>
        </div>
        <div className="flex items-center mt-[33px] pl-[68px]">
          <span className="w-[105px] tracking-[1.5px]">참조</span>
          <div className="w-[638px] h-[67px] bg-[#f9f7ff] border-2 border-[#bbbdc0] flex items-center pl-[50px] text-[#aaa] tracking-[-0.5px]">RIGHT:F1(기준면)</div>
        </div>
        <div className="flex items-center mt-[17px] pl-[73px]">
          <span className="w-[100px] tracking-[1.5px]">방향</span>
          <div className="w-[233px] h-[73px] bg-[#fafafa] border-2 border-b-[3px] border-[#bbbdc0] flex items-center">
            <span className="w-[180px] pl-[20px] tracking-[2px]">오른쪽</span>
            <div className="h-full w-[2px] bg-[#bbbdc0]" />
            <Tri c="#555" w={20} h={12} className="ml-[14px]" />
          </div>
        </div>
      </div>
      <div className="mt-[56px] h-[2px] bg-[#d5d7d9]" />
      <div className="mt-[36px] flex justify-end gap-[28px] pr-[35px]">
        <div className="w-[180px] h-[77px] bg-[#fbfbfb] border-2 border-[#b8babd] flex items-center justify-center tracking-[1.5px]">스케치</div>
        <div className="w-[180px] h-[77px] bg-[#fbfbfb] border-2 border-[#b8babd] flex items-center justify-center tracking-[1.5px]">취소</div>
      </div>
    </div>
  );
}

const CadLabel = ({ className, children }) => (
  <span className={`absolute text-[54px] leading-none font-['Liberation_Sans',sans-serif] whitespace-nowrap ${className}`}>{children}</span>
);

function Canvas() {
  return (
    <div className="relative flex-1 bg-[#e9ebef]">
      <svg width="3049" height="1945" viewBox="882 530 3049 1945" className="absolute inset-0 block">
        <rect x="1154" y="751" width="1566" height="1563" fill="#9dd89c" stroke="#06bd06" strokeWidth="7" />
        <line x1="892" y1="1533" x2="3931" y2="1533" stroke="#12a3a3" strokeWidth="3" strokeDasharray="19 18" />
        <line x1="1157" y1="1533" x2="2720" y2="1533" stroke="#12a3a3" strokeWidth="3" />
        <line x1="1157" y1="1533" x2="2720" y2="1533" stroke="#7a4a52" strokeWidth="3" strokeDasharray="19 18" strokeDashoffset="-8" />
        <line x1="1936" y1="530" x2="1936" y2="2475" stroke="#12a3a3" strokeWidth="3" strokeDasharray="19 18" />
        <line x1="1936" y1="751" x2="1936" y2="2314" stroke="#06a0a0" strokeWidth="7" />
        <line x1="1960" y1="1533" x2="1990" y2="1533" stroke="#ff3030" strokeWidth="3" />
        <polygon points="1988,1528 2014,1533 1988,1538" fill="#e05050" />
        <circle cx="1154" cy="1376" r="25" fill="#bb44d4" stroke="#c06080" strokeWidth="2" />
        <path d="M1140 1362 L1168 1390 M1168 1362 L1140 1390" stroke="#a01c70" strokeWidth="3" />
      </svg>
      <CadLabel className="left-[274px] top-[957px] text-[#7a4a52]">FRONT</CadLabel>
      <CadLabel className="left-[609px] top-[1003px] text-[#7a4a52] tracking-[1.3px]">PRT_CSYS_DEF</CadLabel>
      <CadLabel className="left-[1059px] top-[954px] text-[#33ff33]">Y</CadLabel>
      <CadLabel className="left-[1141px] top-[954px] text-[#ff2222]">X</CadLabel>
      <CadLabel className="left-[1059px] top-[1088px] text-[#22ffff]">Z</CadLabel>
      <CadLabel className="left-[1054px] top-[1738px] text-[#06a8a8] tracking-[0.5px]">RIGHT</CadLabel>
      <CadLabel className="left-[1835px] top-[177px] text-[#00c000] tracking-[3px]">TOP</CadLabel>

      {/* 보기 도구 모음 */}
      <div className="absolute left-[1407px] top-[18px] w-[1362px] h-[99px] bg-[#f9fafc] border-x-2 border-y-[3px] border-[#b0b2b2] flex items-center pl-[22px] gap-[31px]">
        <V1 /><Mag plus /><Mag /><V4 />
        <div className="ml-[3px]"><V5 /></div>
        <div className="-ml-[3px]"><V6 /></div>
        <V7 />
        <V8 />
        <div className="ml-[4px]"><V9 /></div>
        <div className="ml-[1px]"><V10 /></div>
        <V11 />
        <div className="-ml-[12px] w-[76px] h-[76px] bg-[#dedfe1] border-2 border-[#c4c6c6] flex items-center justify-center"><V12 /></div>
        <div className="-ml-[10px]"><V13 /></div>
        <V14 />
        <div className="ml-[1px]"><V15 /></div>
        <div className="ml-[10px]"><V16 /></div>
      </div>

      {/* 강조 표시 */}
      <div className="absolute left-[1718px] top-[130px] w-[330px] h-[138px] border-[9px] border-[#d12c39] rounded-[4px]" />

      <Dialog />
    </div>
  );
}

export default function App() {
  return (
    <div className="relative w-[3931px] h-[2475px] overflow-hidden bg-[#e9ebef] font-['Noto_Sans','Noto_Sans_CJK_KR',sans-serif]">
      <div className="flex h-[92px] bg-[#3d4546] text-[48px] leading-none tracking-[1px]">
        {ribbonTabs.map((t) => (
          <div key={t.label} className={`h-full flex items-center justify-center shrink-0 ${t.cls}`}>
            {t.label}
          </div>
        ))}
        <div className="w-[329px] h-[96px] ml-[23px] bg-[#f9fafc] flex items-center justify-center italic text-[#888] text-[50px] pr-[8px] z-10 relative">
          밀어내기
        </div>
      </div>
      <Ribbon />
      <QuickBar />
      <div className="flex h-[1945px]">
        <Sidebar />
        <Canvas />
      </div>
    </div>
  );
}
